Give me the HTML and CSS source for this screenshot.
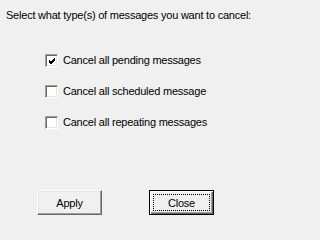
FILE: index.html
```html
<!DOCTYPE html>
<html>
<head>
<meta charset="utf-8">
<link rel="stylesheet" href="styles.css">
</head>
<body>
<div class="dialog">
  <div class="prompt">Select what type(s) of messages you want to cancel:</div>
  <div class="options">
    <label class="opt">
      <span class="box"><svg width="9" height="9" viewBox="0 0 9 9"><path d="M1 3 L3 5 L7 1 M1 4 L3 6 L7 2 M1 5 L3 7 L7 3" stroke="#000" stroke-width="1" fill="none" shape-rendering="crispEdges"/></svg></span>
      <span class="lbl">Cancel all pending messages</span>
    </label>
    <label class="opt">
      <span class="box"></span>
      <span class="lbl">Cancel all scheduled message</span>
    </label>
    <label class="opt">
      <span class="box"></span>
      <span class="lbl">Cancel all repeating messages</span>
    </label>
  </div>
  <div class="buttons">
    <button class="btn">Apply</button>
    <button class="btn default"><span class="focus">Close</span></button>
  </div>
</div>
</body>
</html>
```
FILE: styles.css
```css
html, body {
  margin: 0;
  padding: 0;
  background: #f0f0f0;
}
body {
  width: 257px;
  height: 220px;
  overflow: hidden;
  font-family: "Liberation Sans", Arial, sans-serif;
  font-size: 11px;
  letter-spacing: -0.22px;
  color: #000;
}
.dialog {
  display: flex;
  flex-direction: column;
}
.prompt {
  padding: 9px 0 0 6px;
  line-height: 13px;
  white-space: nowrap;
}
.options {
  display: flex;
  flex-direction: column;
  gap: 18px;
  padding: 32px 0 0 45px;
}
.opt {
  display: flex;
  align-items: center;
  gap: 5px;
  height: 13px;
}
.box {
  box-sizing: border-box;
  width: 13px;
  height: 13px;
  background: #fff;
  border-top: 1px solid #a0a0a0;
  border-left: 1px solid #a0a0a0;
  border-right: 1px solid #fff;
  border-bottom: 1px solid #fff;
  box-shadow: inset 1px 1px 0 #696969, inset -1px -1px 0 #e3e3e3;
  display: flex;
  align-items: center;
  justify-content: center;
}
.box svg {
  display: block;
  margin: 1px 0 0 1px;
}
.lbl {
  line-height: 13px;
  white-space: nowrap;
}
.buttons {
  display: flex;
  gap: 47px;
  padding: 61px 0 0 37px;
}
.btn {
  box-sizing: border-box;
  width: 65px;
  height: 25px;
  margin: 0;
  padding: 0;
  font-family: "Liberation Sans", Arial, sans-serif;
  font-size: 11px;
  letter-spacing: -0.22px;
  color: #000;
  background: #f0f0f0;
  border-top: 1px solid #fff;
  border-left: 1px solid #fff;
  border-right: 1px solid #696969;
  border-bottom: 1px solid #696969;
  box-shadow: inset -1px -1px 0 #a0a0a0, inset 1px 1px 0 #e3e3e3;
  display: flex;
  align-items: center;
  justify-content: center;
}
.btn.default {
  border: 1px solid #000;
  box-shadow: inset 1px 1px 0 #fff, inset -1px -1px 0 #696969, inset -2px -2px 0 #a0a0a0;
  padding: 3px;
}
.focus {
  box-sizing: border-box;
  flex: 1;
  align-self: stretch;
  border: 1px dotted #000;
  display: flex;
  align-items: center;
  justify-content: center;
}
```
